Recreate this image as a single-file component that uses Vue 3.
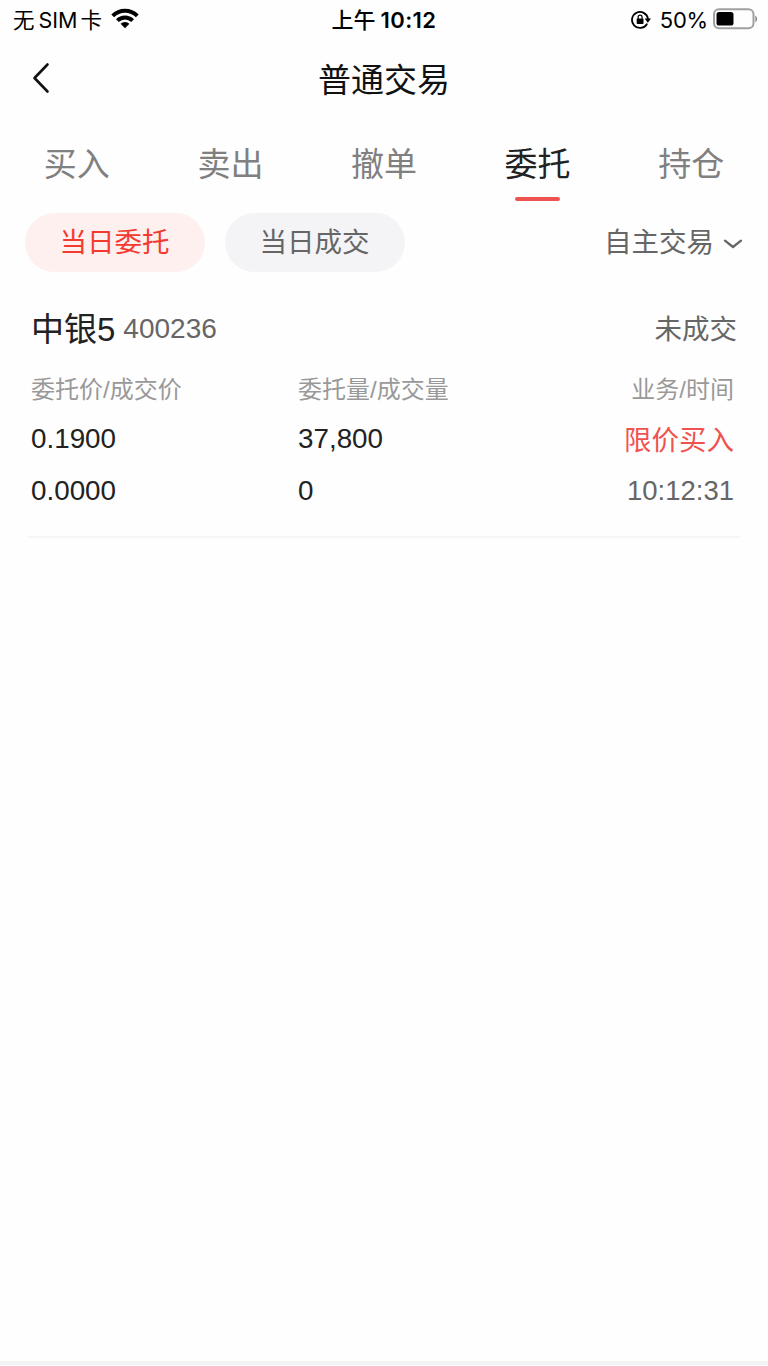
<template>
  <div class="trade-page">
    <!-- 状态栏 -->
    <div class="status-bar">
      <div class="status-left">
        <span class="carrier"><span>无</span><span class="sim">SIM</span><span>卡</span></span>
        <svg class="wifi" width="28" height="21" viewBox="0 0 28 21">
          <path d="M0.3 6.4 A19.4 19.4 0 0 1 27.7 6.4 L24.9 9.2 A15.4 15.4 0 0 0 3.1 9.2 Z" />
          <path d="M5 11.2 A12.7 12.7 0 0 1 23 11.2 L20.2 14 A8.8 8.8 0 0 0 7.8 14 Z" />
          <path d="M9.6 15.8 A6.3 6.3 0 0 1 18.4 15.8 L14 20.3 Z" />
        </svg>
      </div>
      <div class="status-time"><span>上午</span><span class="clock">10:12</span></div>
      <div class="status-right">
        <svg class="lock" width="20" height="20" viewBox="0 0 20 20">
          <path d="M15.8 14.2 A8 8 0 1 1 16.9 8.6" fill="none" stroke="#000" stroke-width="1.8" stroke-linecap="round" />
          <path d="M13.6 8.6 H20 L16.8 12.8 Z" />
          <rect x="5.7" y="8.6" width="6.8" height="5.4" rx="0.8" />
          <path d="M7.1 9 V7.2 a2 2 0 0 1 4 0 V9" fill="none" stroke="#000" stroke-width="1.2" />
        </svg>
        <span class="percent">50%</span>
        <svg class="battery" width="45" height="22" viewBox="0 0 45 22">
          <rect x="1" y="1.3" width="39.5" height="19" rx="5" fill="none" stroke="#a0a0a0" stroke-width="2" />
          <rect x="3.5" y="4" width="17" height="13.6" rx="2.6" />
          <path d="M42.3 7.4 a4.2 4.2 0 0 1 0 7 Z" fill="#8c8c8c" />
        </svg>
      </div>
    </div>

    <!-- 标题栏 -->
    <div class="nav-bar">
      <svg class="back" width="20" height="34" viewBox="0 0 20 34">
        <path d="M16.5 3.5 L3.5 17 L16.5 30.5" fill="none" stroke="#111" stroke-width="2.6" stroke-linecap="round" stroke-linejoin="round" />
      </svg>
      <h1>普通交易</h1>
    </div>

    <div class="tabs">
      <div
        v-for="tab in tabs"
        :key="tab"
        class="tab"
        :class="{ active: activeTab === tab }"
        @click="activeTab = tab"
      >
        {{ tab }}
      </div>
    </div>

    <div class="filter-bar">
      <button
        v-for="f in filters"
        :key="f"
        class="pill"
        :class="{ active: activeFilter === f }"
        @click="activeFilter = f"
      >
        {{ f }}
      </button>
      <div class="trade-type">
        <span>自主交易</span>
        <svg width="20" height="12" viewBox="0 0 20 12">
          <path d="M2 3.6 L10 10 L18 3.6" fill="none" stroke="#666" stroke-width="2.3" stroke-linecap="round" stroke-linejoin="round" />
        </svg>
      </div>
    </div>

    <!-- 委托列表 -->
    <div v-for="order in orders" :key="order.code + order.time" class="order">
      <div class="order-head">
        <span class="order-name">{{ order.name }}</span>
        <span class="order-code">{{ order.code }}</span>
        <span class="order-status">{{ order.status }}</span>
      </div>
      <div class="order-grid">
        <span class="label">委托价/成交价</span>
        <span class="label">委托量/成交量</span>
        <span class="label right">业务/时间</span>
        <span>{{ order.price }}</span>
        <span>{{ order.amount }}</span>
        <span class="right buy">{{ order.type }}</span>
        <span class="deal">{{ order.dealPrice }}</span>
        <span class="deal">{{ order.dealAmount }}</span>
        <span class="right deal time">{{ order.time }}</span>
      </div>
    </div>

    <div class="bottom-line"></div>
  </div>
</template>

<script setup>
import { ref } from 'vue'

const tabs = ['买入', '卖出', '撤单', '委托', '持仓']
const activeTab = ref('委托')

const filters = ['当日委托', '当日成交']
const activeFilter = ref('当日委托')

const orders = ref([
  {
    name: '中银5',
    code: '400236',
    status: '未成交',
    price: '0.1900',
    dealPrice: '0.0000',
    amount: '37,800',
    dealAmount: '0',
    type: '限价买入',
    time: '10:12:31'
  }
])
</script>

<style>
body { margin: 0; background: #fefefe; }
</style>

<style scoped>
.trade-page {
  display: flex; flex-direction: column; width: 768px; height: 1366px;
  box-sizing: border-box; overflow: hidden; background: #fefefe; color: #222;
  font-family: "Liberation Sans", "Noto Sans CJK SC", sans-serif;
}

.status-bar {
  display: grid; grid-template-columns: 1fr auto 1fr; align-items: center;
  height: 40px; padding: 0 10px 0 13px; color: #000;
  font-family: Inter, "Noto Sans CJK SC", sans-serif; font-size: 22px; line-height: 40px;
}
.status-left, .status-right { display: flex; align-items: center; }
.status-right { justify-content: flex-end; }
.carrier { display: flex; font-size: 21.5px; }
.sim { margin: 0 3px 0 4px; }
.wifi { margin: -3px 0 0 9px; }
.status-time { display: flex; padding-right: 3px; font-weight: 500; }
.clock { margin-left: 5px; font-weight: 600; letter-spacing: 0.4px; }
.percent { margin: 0 5px 0 9px; letter-spacing: -0.2px; }
.battery { margin-top: -2px; }

.nav-bar { display: grid; grid-template-columns: 1fr auto 1fr; align-items: center; height: 78px; padding: 0 31px; }
.nav-bar h1 { margin: 0; padding-top: 3px; font-size: 33px; line-height: 75px; font-weight: 400; color: #111; }
.back { margin-top: -2px; }

.tabs { display: flex; height: 95px; }
.tab {
  display: flex; flex-direction: column; align-items: center; flex: 1; padding-top: 16px;
  font-size: 33px; line-height: 62px; color: #808080; cursor: pointer;
}
.tab.active { color: #222; }
.tab.active::after { content: ''; width: 45px; height: 4px; margin-top: 1px; border-radius: 2px; background: #ef5350; }

.filter-bar { display: flex; align-items: center; gap: 20px; height: 59px; padding: 0 25px; }
.pill {
  width: 180px; height: 59px; padding: 0 1px 0 0; border: none; border-radius: 30px;
  background: #f4f4f7; color: #666; font-family: inherit; font-size: 27.5px; line-height: 57px; cursor: pointer;
}
.pill.active { background: #fdf0ef; color: #f43b30; }
.trade-type { display: flex; align-items: center; gap: 9px; margin-left: auto; font-size: 27.5px; line-height: 56px; color: #666; }

.order { margin: 28px 28px 0; padding: 0 3px; border-bottom: 2px solid #f5f5f5; height: 236px; }
.order-head { display: flex; align-items: center; height: 56px; }
.order-name { padding-top: 4px; font-size: 33px; line-height: 56px; }
.order-code { margin-left: 8px; padding-top: 2px; font-size: 28px; color: #666; }
.order-status { margin-left: auto; padding-bottom: 2px; font-size: 27.5px; color: #666; }
.order-grid {
  display: grid; grid-template-columns: 267px 267px 1fr; grid-template-rows: 58px 50px 52px;
  align-items: center; font-size: 27.8px;
}
.label { padding-top: 4px; font-size: 24px; color: #999; }
.right { text-align: right; padding-right: 3px; }
.buy { padding-bottom: 2px; font-size: 27.5px; color: #ef5350; }
.deal { padding-top: 2px; }
.time { font-size: 27.5px; color: #666; }

.bottom-line { height: 4px; margin: auto 0 1px; background: #f2f2f2; }
</style>
